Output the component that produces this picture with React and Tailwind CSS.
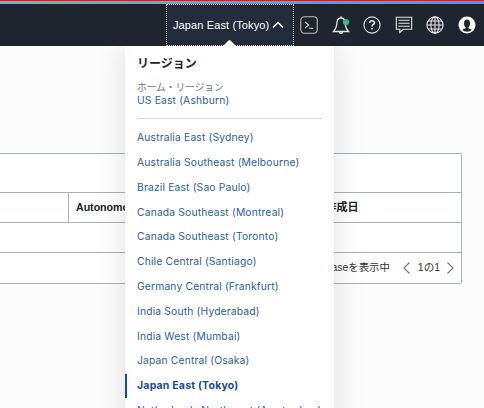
const regions = [
  'Australia East (Sydney)',
  'Australia Southeast (Melbourne)',
  'Brazil East (Sao Paulo)',
  'Canada Southeast (Montreal)',
  'Canada Southeast (Toronto)',
  'Chile Central (Santiago)',
  'Germany Central (Frankfurt)',
  'India South (Hyderabad)',
  'India West (Mumbai)',
  'Japan Central (Osaka)',
  'Japan East (Tokyo)',
  'Netherlands Northwest (Amsterdam)',
];

function Icon({ children }) {
  return (
    <svg
      className="h-[18px] w-[18px] shrink-0"
      viewBox="0 0 18 18"
      fill="none"
      stroke="#e4e6e8"
      strokeWidth="1.1"
    >
      {children}
    </svg>
  );
}

function Header() {
  return (
    <header className="flex h-[42px] items-stretch bg-[#1e252e] pl-[166px]">
      <button className="relative flex w-32 shrink-0 items-center border border-dotted border-[#c4c9cf] bg-[#222c3a] pl-[6px] font-['Liberation_Sans',sans-serif] text-[11px] tracking-[0.12px] whitespace-nowrap text-white">
        Japan East (Tokyo)
        <svg className="ml-[3px] h-2 w-3 shrink-0" viewBox="0 0 12 8" fill="none" stroke="#fff" strokeWidth="1.5">
          <path d="M1 6.5 6 1.5 11 6.5" />
        </svg>
        <svg className="absolute -bottom-px left-[56px] h-[6px] w-[13px]" viewBox="0 0 13 6" fill="#fff">
          <path d="M0 6 5.5.5Q6.5-.3 7.5.5L13 6Z" />
        </svg>
      </button>
      <div className="flex items-center gap-[13.5px] pl-[6px]">
        <Icon>
          <rect x="0.8" y="0.8" width="16.4" height="16.4" rx="3.5" stroke="#b9bdc2" />
          <path d="m5 5.8 3.7 3.2L5 12.2M9.2 12.3h4" />
        </Icon>
        <Icon>
          <path d="M9 2C6.500 2 5.200 3.800 5 6.200 4.700 10.500 4.100 12.700 1.500 15.500h15c-2.600-2.800-3.200-5-3.500-9.300C12.800 3.800 11.500 2 9 2ZM9 .3V2M7.300 15.600c.1 2.300 3.300 2.300 3.400 0" strokeWidth="1.3" />
          <circle cx="14" cy="6" r="3.100" fill="#2fbf98" stroke="none" />
        </Icon>
        <Icon>
          <circle cx="9" cy="9" r="8.1" />
          <path d="M6.700 7c0-3 4.800-2.900 4.800-.2C11.500 8.500 9 8.500 9 10.600M9 12v1.500" strokeWidth="1.6" />
        </Icon>
        <Icon>
          <path d="M1.300 1.300h15.400v11.900H8.300L4.800 16.500v-3.300H1.300ZM3.300 4.300h11.400M3.300 7.300h11.400M3.300 10.300h11.400" />
        </Icon>
        <Icon>
          <circle cx="9" cy="9" r="8.100" />
          <ellipse cx="9" cy="9" rx="4.100" ry="8.100" />
          <path d="M9 1v16M1 9h16M2.300 5h13.400M2.300 13h13.400" />
        </Icon>
        <Icon>
          <circle cx="9" cy="9" r="8.500" fill="#fff" stroke="none" />
          <ellipse cx="9" cy="7.500" rx="3" ry="3.900" fill="#1e252e" stroke="none" />
          <path d="M7.600 10v2.200L4.200 13.700C6.500 16.300 11.500 16.300 13.800 13.700L10.400 12.200V10Z" fill="#1e252e" stroke="none" />
        </Icon>
      </div>
    </header>
  );
}

function ResultsTable() {
  return (
    <section className="w-[462px] rounded-r-[2px] border border-l-0 border-[#a8b0bc] bg-white text-[#333] font-['Liberation_Sans','Noto_Sans_CJK_JP',sans-serif] text-[11px]">
      <div className="h-[38px]" />
      <div className="flex h-[31px] items-stretch border-y border-[#a8b0bc] font-bold text-[#222]">
        <div className="w-[68px]" />
        <div className="flex w-[250px] items-center border-l border-[#a8b0bc] pl-[7px] text-[10.6px]">Autonomous</div>
        <div className="flex items-center pl-[7.500px]">作成日</div>
      </div>
      <div className="h-[29px]" />
      <div className="flex h-[31px] items-center justify-end border-t border-[#a8b0bc] pr-[7px]">
        <span className="text-[10.4px] whitespace-nowrap">Databaseを表示中</span>
        <svg className="ml-[13px] h-3 w-[7px]" viewBox="0 0 7 12" fill="none" stroke="#777" strokeWidth="1.1">
          <path d="M6.500.500 1 6l5.500 5.500" />
        </svg>
        <span className="mr-[7px] ml-[8px] text-[10.5px]">1の1</span>
        <svg className="h-3 w-[7px]" viewBox="0 0 7 12" fill="none" stroke="#777" strokeWidth="1.1">
          <path d="M.500.500 6 6 .500 11.500" />
        </svg>
      </div>
    </section>
  );
}

function RegionMenu() {
  return (
    <div className="absolute top-0 left-[125px] h-[420px] w-[209px] bg-white font-['Inter','Noto_Sans_CJK_JP',sans-serif] text-[10.3px] text-[#2d5f9f] shadow-[0_0_30px_rgba(0,0,0,0.12)]">
      <h2 className="pt-[9px] pl-3 text-[12px] leading-[18px] font-bold text-[#20252c]">リージョン</h2>
      <div className="mx-3 border-b border-[#d9dadb] pt-[8px] pb-[11px]">
        <div className="h-[13px] text-[9.7px] leading-[13px] text-[#777]">ホーム・リージョン</div>
        <div className="h-[13px] leading-[13px] tracking-[0.17px]">US East (Ashburn)</div>
      </div>
      <ul className="pt-[6.6px]">
        {regions.map((region) => (
          <li
            key={region}
            className={
              'flex h-[24.8px] items-center whitespace-nowrap ' +
              (region === 'Japan East (Tokyo)'
                ? 'border-l-2 border-[#174d91] pl-[10px] text-[10.5px] font-bold tracking-[0.2px] text-[#174d91]'
                : 'pl-3 tracking-[0.17px]')
            }
          >
            {region}
          </li>
        ))}
      </ul>
    </div>
  );
}

export default function App() {
  return (
    <div className="h-[408px] w-[484px] overflow-hidden bg-[#fcfcfc]">
      <div className="h-px bg-[#b8292f]" />
      <div className="h-[3px] bg-linear-to-r from-[#6fb5b9] via-[#5ba4d9] to-[#4d94ff]" />
      <Header />
      <main className="relative h-[362px] overflow-hidden pt-[107px]">
        <ResultsTable />
        <RegionMenu />
      </main>
    </div>
  );
}
